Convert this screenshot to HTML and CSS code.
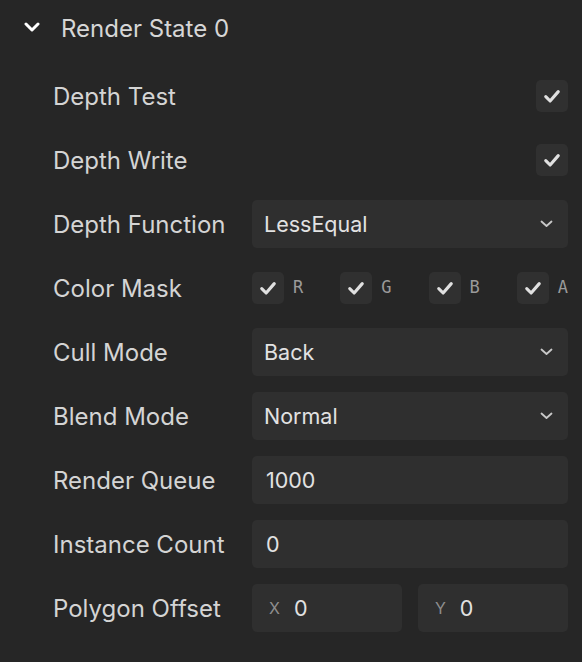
FILE: index.html
```html
<!DOCTYPE html>
<html lang="en">
<head>
    <meta charset="UTF-8">
    <title>Render State</title>
    <link rel="stylesheet" href="styles.css">
</head>
<body>
    <div class="panel">
        <div class="section-header">
            <svg class="caret" width="16" height="10" viewBox="0 0 16 10">
                <path d="M2 2 L8 8 L14 2" fill="none" stroke="#ffffff" stroke-width="3" stroke-linecap="round" stroke-linejoin="round"/>
            </svg>
            <span>Render State 0</span>
        </div>

        <div class="props">
            <div class="prop">
                <div class="prop-label">Depth Test</div>
                <div class="prop-value end">
                    <span class="check"><svg viewBox="0 0 16 16"><path d="M3 8.5 L6.5 12 L13 4.5"/></svg></span>
                </div>
            </div>
            <div class="prop">
                <div class="prop-label">Depth Write</div>
                <div class="prop-value end">
                    <span class="check"><svg viewBox="0 0 16 16"><path d="M3 8.5 L6.5 12 L13 4.5"/></svg></span>
                </div>
            </div>
            <div class="prop">
                <div class="prop-label">Depth Function</div>
                <div class="prop-value">
                    <div class="field select">
                        <span>LessEqual</span>
                        <svg class="arrow" viewBox="0 0 12 8"><path d="M1 1.5 L6 6 L11 1.5"/></svg>
                    </div>
                </div>
            </div>
            <div class="prop">
                <div class="prop-label">Color Mask</div>
                <div class="prop-value mask">
                    <div class="mask-item">
                        <span class="check"><svg viewBox="0 0 16 16"><path d="M3 8.5 L6.5 12 L13 4.5"/></svg></span>
                        <span class="mask-key">R</span>
                    </div>
                    <div class="mask-item">
                        <span class="check"><svg viewBox="0 0 16 16"><path d="M3 8.5 L6.5 12 L13 4.5"/></svg></span>
                        <span class="mask-key">G</span>
                    </div>
                    <div class="mask-item">
                        <span class="check"><svg viewBox="0 0 16 16"><path d="M3 8.5 L6.5 12 L13 4.5"/></svg></span>
                        <span class="mask-key">B</span>
                    </div>
                    <div class="mask-item">
                        <span class="check"><svg viewBox="0 0 16 16"><path d="M3 8.5 L6.5 12 L13 4.5"/></svg></span>
                        <span class="mask-key">A</span>
                    </div>
                </div>
            </div>
            <div class="prop">
                <div class="prop-label">Cull Mode</div>
                <div class="prop-value">
                    <div class="field select">
                        <span>Back</span>
                        <svg class="arrow" viewBox="0 0 12 8"><path d="M1 1.5 L6 6 L11 1.5"/></svg>
                    </div>
                </div>
            </div>
            <div class="prop">
                <div class="prop-label">Blend Mode</div>
                <div class="prop-value">
                    <div class="field select">
                        <span>Normal</span>
                        <svg class="arrow" viewBox="0 0 12 8"><path d="M1 1.5 L6 6 L11 1.5"/></svg>
                    </div>
                </div>
            </div>
            <div class="prop">
                <div class="prop-label">Render Queue</div>
                <div class="prop-value">
                    <div class="field number">1000</div>
                </div>
            </div>
            <div class="prop">
                <div class="prop-label">Instance Count</div>
                <div class="prop-value">
                    <div class="field number">0</div>
                </div>
            </div>
            <div class="prop">
                <div class="prop-label">Polygon Offset</div>
                <div class="prop-value vec">
                    <div class="field vec-field"><span class="axis">X</span>0</div>
                    <div class="field vec-field"><span class="axis">Y</span>0</div>
                </div>
            </div>
        </div>
    </div>
</body>
</html>
```

FILE: styles.css
```css
body {
    margin: 0;
    background: #262626;
    font-family: Inter, "Noto Sans", sans-serif;
    color: #d4d4d4;
}
.panel {
    width: 582px;
    height: 662px;
    overflow: hidden;
}
.section-header {
    height: 56px;
    display: flex;
    align-items: center;
    padding-left: 24px;
    font-size: 24px;
    color: #d6d6d6;
}
.section-header .caret {
    margin-right: 21px;
    margin-top: -2px;
}
.props {
    padding: 8px 14px 0 53px;
}
.prop {
    height: 64px;
    display: flex;
    align-items: center;
}
.prop-label {
    width: 199px;
    font-size: 24px;
    white-space: nowrap;
}
.prop-value {
    flex: 1;
    display: flex;
    align-items: center;
}
.prop-value.end {
    justify-content: flex-end;
}
.check {
    width: 32px;
    height: 32px;
    border-radius: 5px;
    background: #303030;
    display: flex;
    align-items: center;
    justify-content: center;
}
.check svg {
    width: 20px;
    height: 20px;
    fill: none;
    stroke: #e0e0e0;
    stroke-width: 2.5;
    stroke-linecap: round;
    stroke-linejoin: round;
}
.field {
    height: 48px;
    box-sizing: border-box;
    background: #2f2f2f;
    border-radius: 5px;
    display: flex;
    align-items: center;
    padding: 0 12px;
    font-size: 21.5px;
    color: #e2e2e2;
}
.select {
    flex: 1;
    justify-content: space-between;
    padding-right: 15px;
}
.arrow {
    width: 13px;
    height: 8px;
    fill: none;
    stroke: #c8c8c8;
    stroke-width: 1.8;
    stroke-linecap: round;
    stroke-linejoin: round;
}
.number {
    flex: 1;
    padding-left: 14px;
}
.mask {
    justify-content: space-between;
}
.mask-item {
    display: flex;
    align-items: center;
    gap: 9px;
}
.mask-key {
    font-family: "DejaVu Sans Mono", monospace;
    font-size: 17px;
    color: #9a9a9a;
    margin-top: -2px;
}
.vec {
    gap: 16px;
}
.vec-field {
    flex: 1;
    padding-left: 17px;
}
.axis {
    font-size: 16px;
    color: #8e8e8e;
    margin-right: 14px;
}
```
